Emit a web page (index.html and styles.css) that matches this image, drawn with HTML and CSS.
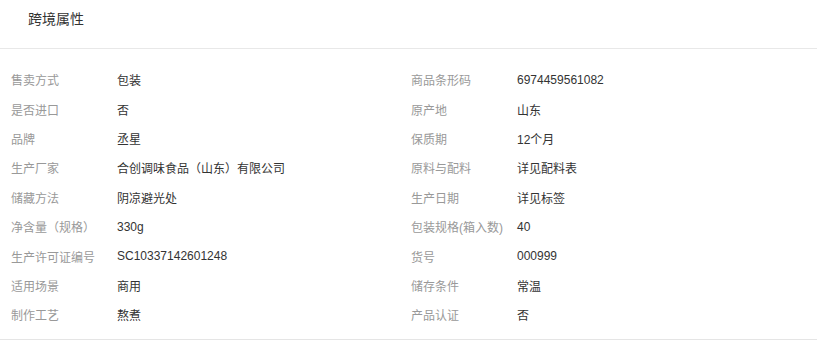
FILE: index.html
```html
<!DOCTYPE html>
<html lang="zh">
<head>
<meta charset="utf-8">
<link rel="stylesheet" href="styles.css">
</head>
<body>
<div class="panel">
  <div class="panel-head"><span class="panel-title">跨境属性</span></div>
  <div class="attrs">
    <div class="attr"><span class="attr-label">售卖方式</span><span class="attr-value">包装</span></div>
    <div class="attr"><span class="attr-label">商品条形码</span><span class="attr-value">6974459561082</span></div>
    <div class="attr"><span class="attr-label">是否进口</span><span class="attr-value">否</span></div>
    <div class="attr"><span class="attr-label">原产地</span><span class="attr-value">山东</span></div>
    <div class="attr"><span class="attr-label">品牌</span><span class="attr-value">丞星</span></div>
    <div class="attr"><span class="attr-label">保质期</span><span class="attr-value">12个月</span></div>
    <div class="attr"><span class="attr-label">生产厂家</span><span class="attr-value">合创调味食品（山东）有限公司</span></div>
    <div class="attr"><span class="attr-label">原料与配料</span><span class="attr-value">详见配料表</span></div>
    <div class="attr"><span class="attr-label">储藏方法</span><span class="attr-value">阴凉避光处</span></div>
    <div class="attr"><span class="attr-label">生产日期</span><span class="attr-value">详见标签</span></div>
    <div class="attr"><span class="attr-label">净含量（规格）</span><span class="attr-value">330g</span></div>
    <div class="attr"><span class="attr-label">包装规格(箱入数)</span><span class="attr-value">40</span></div>
    <div class="attr"><span class="attr-label">生产许可证编号</span><span class="attr-value">SC10337142601248</span></div>
    <div class="attr"><span class="attr-label">货号</span><span class="attr-value">000999</span></div>
    <div class="attr"><span class="attr-label">适用场景</span><span class="attr-value">商用</span></div>
    <div class="attr"><span class="attr-label">储存条件</span><span class="attr-value">常温</span></div>
    <div class="attr"><span class="attr-label">制作工艺</span><span class="attr-value">熬煮</span></div>
    <div class="attr"><span class="attr-label">产品认证</span><span class="attr-value">否</span></div>
  </div>
</div>
</body>
</html>
```
FILE: styles.css
```css
html, body {
  margin: 0;
  padding: 0;
  background: #fff;
}
body {
  font-family: "Liberation Sans", "Noto Sans CJK SC", sans-serif;
  font-size: 12px;
  color: #333;
}
.panel {
  width: 817px;
}
.panel-head {
  height: 49px;
  box-sizing: border-box;
  padding: 10px 0 0 28px;
  border-bottom: 1px solid #e8e8e8;
}
.panel-title {
  font-size: 14px;
  line-height: 18px;
  color: #333;
}
.attrs {
  display: grid;
  grid-template-columns: 400px 1fr;
  grid-auto-rows: 29.4px;
  padding: 16px 0 9px 11px;
  border-bottom: 1px solid #e5e5e5;
}
.attr {
  display: flex;
  align-items: center;
}
.attr-label {
  width: 106px;
  flex: none;
  color: #999;
  white-space: nowrap;
}
.attr-value {
  color: #333;
  white-space: nowrap;
}
```
